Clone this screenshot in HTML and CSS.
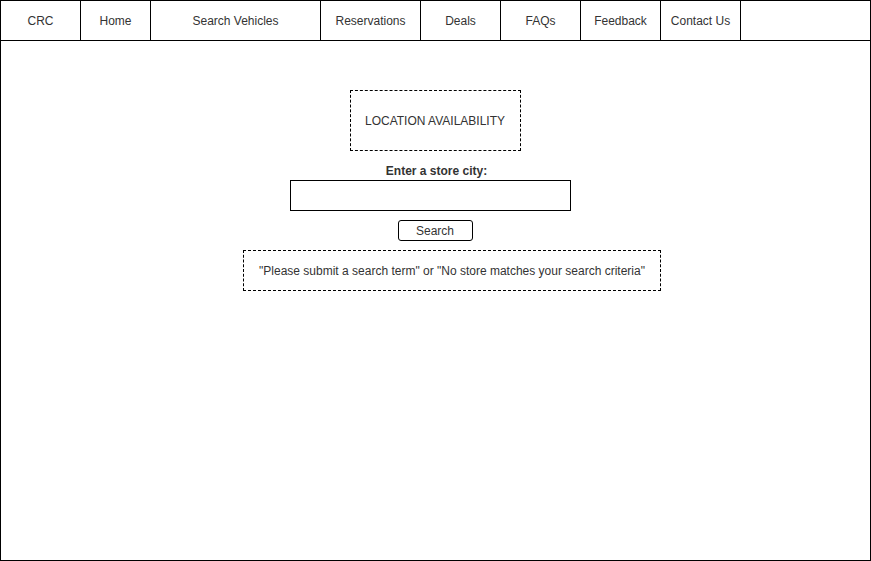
FILE: index.html
```html
<!DOCTYPE html>
<html>
<head>
<meta charset="utf-8">
<link rel="stylesheet" href="styles.css">
</head>
<body>
<div class="frame">
  <nav class="nav">
    <div class="nav-item w80">CRC</div>
    <div class="nav-item w70">Home</div>
    <div class="nav-item w170">Search Vehicles</div>
    <div class="nav-item w100">Reservations</div>
    <div class="nav-item w80">Deals</div>
    <div class="nav-item w80">FAQs</div>
    <div class="nav-item w80">Feedback</div>
    <div class="nav-item w80">Contact Us</div>
  </nav>
  <main class="content">
    <div class="title-box">LOCATION AVAILABILITY</div>
    <label class="label" for="city">Enter a store city:</label>
    <input class="city-input" id="city" type="text">
    <button class="search-btn" type="button">Search</button>
    <div class="message-box">"Please submit a search term" or "No store matches your search criteria"</div>
  </main>
</div>
</body>
</html>
```
FILE: styles.css
```css
* { box-sizing: border-box; }
html, body { margin: 0; padding: 0; background: #fff; }
body {
  font-family: "Liberation Sans", Arial, Helvetica, sans-serif;
  font-size: 12px;
  color: #333;
}
.frame {
  width: 871px;
  height: 561px;
  border: 1px solid #000;
  display: flex;
  flex-direction: column;
}
.nav {
  display: flex;
  height: 40px;
  border-bottom: 1px solid #000;
}
.nav-item {
  display: flex;
  align-items: center;
  justify-content: center;
  border-right: 1px solid #000;
  height: 39px;
  padding-top: 1px;
}
.w80 { width: 80px; }
.w70 { width: 70px; }
.w170 { width: 170px; }
.w100 { width: 100px; }
.content {
  display: flex;
  flex-direction: column;
  align-items: center;
  padding-top: 49px;
}
.title-box {
  width: 171px;
  height: 61px;
  border: 1px dashed #000;
  display: flex;
  align-items: center;
  justify-content: center;
  margin-right: 1px;
}
.label {
  font-weight: bold;
  line-height: 14px;
  margin-top: 13px;
  margin-left: 2px;
}
.city-input {
  width: 281px;
  height: 31px;
  border: 1px solid #000;
  margin-top: 2px;
  margin-right: 10px;
  padding: 0 6px;
  font: inherit;
  outline: none;
}
.search-btn {
  width: 75px;
  height: 21px;
  border: 1px solid #000;
  border-radius: 3px;
  background: #fff;
  margin-top: 9px;
  font: inherit;
  color: #333;
  padding: 1px 0 0;
  margin-right: 1px;
}
.message-box {
  width: 418px;
  height: 41px;
  border: 1px dashed #000;
  margin-top: 9px;
  margin-left: 33px;
  display: flex;
  align-items: center;
  justify-content: center;
}
```
